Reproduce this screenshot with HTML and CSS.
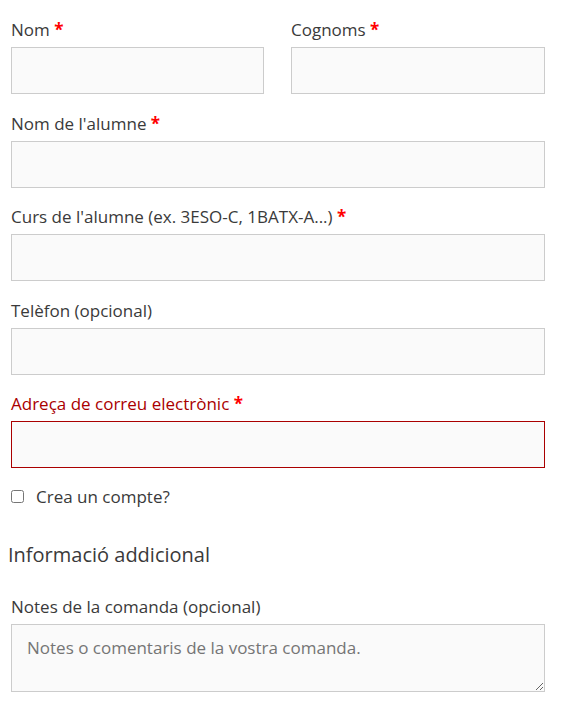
FILE: index.html
```html
<!DOCTYPE html>
<html lang="ca">
<head>
<meta charset="utf-8">
<title>Formulari</title>
<link rel="stylesheet" href="styles.css">
</head>
<body>
<form class="checkout">
  <div class="row-pair">
    <p class="form-row">
      <label class="field-label" for="nom">Nom <abbr class="required" title="obligatori">*</abbr></label>
      <input class="input-text" type="text" id="nom">
    </p>
    <p class="form-row">
      <label class="field-label" for="cognoms">Cognoms <abbr class="required" title="obligatori">*</abbr></label>
      <input class="input-text" type="text" id="cognoms">
    </p>
  </div>
  <p class="form-row">
    <label class="field-label" for="alumne">Nom de l'alumne <abbr class="required" title="obligatori">*</abbr></label>
    <input class="input-text" type="text" id="alumne">
  </p>
  <p class="form-row">
    <label class="field-label" for="curs">Curs de l'alumne (ex. 3ESO-C, 1BATX-A...) <abbr class="required" title="obligatori">*</abbr></label>
    <input class="input-text" type="text" id="curs">
  </p>
  <p class="form-row">
    <label class="field-label" for="telefon">Telèfon (opcional)</label>
    <input class="input-text" type="tel" id="telefon">
  </p>
  <p class="form-row invalid last-field">
    <label class="field-label" for="email">Adreça de correu electrònic <abbr class="required" title="obligatori">*</abbr></label>
    <input class="input-text" type="email" id="email">
  </p>
  <p class="form-row check-row">
    <label class="check-label"><input class="check" type="checkbox"> <span>Crea un compte?</span></label>
  </p>
  <h3 class="section-title">Informació addicional</h3>
  <p class="form-row">
    <label class="field-label" for="notes">Notes de la comanda (opcional)</label>
    <textarea class="input-text notes" id="notes" placeholder="Notes o comentaris de la vostra comanda."></textarea>
  </p>
</form>
</body>
</html>
```

FILE: styles.css
```css
html, body {
  margin: 0;
  padding: 0;
  background: #ffffff;
}

body {
  font-family: "Open Sans", "Liberation Sans", sans-serif;
  font-size: 17px;
  color: #3a3a3a;
}

.checkout {
  width: 540px;
  margin-left: 8px;
  padding-top: 18px;
}

.row-pair {
  display: grid;
  grid-template-columns: 259px 260px;
  column-gap: 21px;
}

.form-row {
  margin: 0 0 17.5px 0;
  padding: 0 3px;
}

.form-row.last-field {
  margin-bottom: 16.5px;
}

.field-label {
  display: block;
  line-height: 24px;
  margin-bottom: 5px;
}

.required {
  color: #ff0000;
  font-weight: 700;
  text-decoration: none;
  border: 0;
}

.input-text {
  display: block;
  box-sizing: border-box;
  width: 100%;
  height: 47px;
  margin: 0;
  padding: 10px 15px;
  border: 1px solid #cccccc;
  border-radius: 0;
  background: #fafafa;
  font-family: inherit;
  font-size: 17px;
  color: #666666;
  outline: none;
}

.invalid .field-label {
  color: #aa0000;
}

.invalid .input-text {
  border-color: #aa0000;
}

.check-row {
  margin-top: 0;
  margin-bottom: 0;
}

.check-label {
  display: flex;
  align-items: center;
  gap: 12px;
  line-height: 24px;
}

.check {
  width: 13px;
  height: 13px;
  margin: 0;
}

.section-title {
  margin: 34px 0 28px 0;
  font-size: 20px;
  font-weight: 400;
  line-height: 24px;
  color: #3a3a3a;
}

.notes {
  height: 68px;
  padding: 11px 15px;
  line-height: 24px;
  resize: vertical;
}

.notes::placeholder {
  color: #757575;
  opacity: 1;
}
```
